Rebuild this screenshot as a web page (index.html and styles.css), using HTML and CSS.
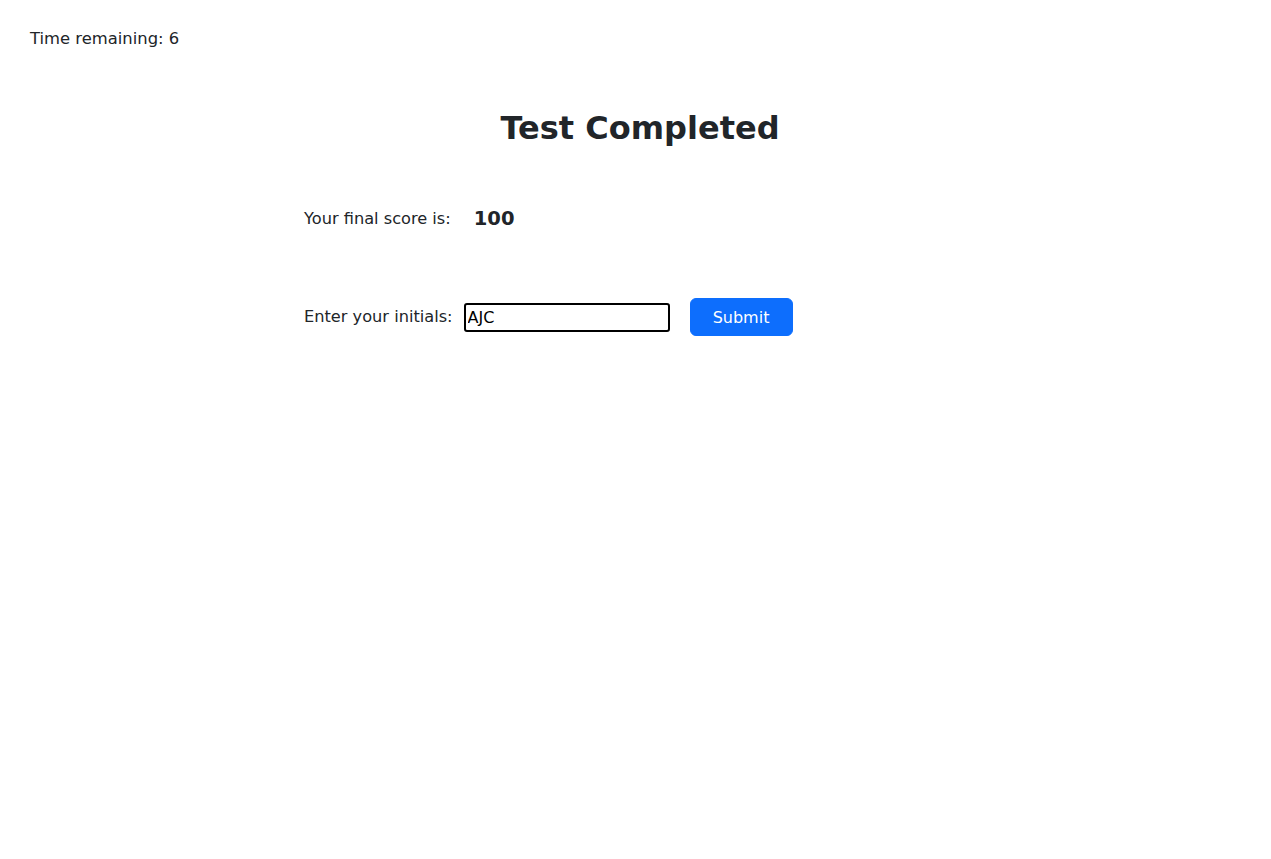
FILE: index.html
```html
<!DOCTYPE html>
<html>
<head>
<meta charset="utf-8">
<link rel="stylesheet" href="styles.css">
</head>
<body>
<header class="topbar">
  <div class="timer">Time remaining: 6</div>
</header>
<main class="main">
  <h1 class="title">Test Completed</h1>
  <div class="panel">
    <div class="score-row">
      <span class="label">Your final score is:</span>
      <span class="score">100</span>
    </div>
    <form class="form-row">
      <label class="label" for="initials">Enter your initials:</label>
      <input id="initials" class="initials" type="text" value="AJC">
      <button type="button" class="submit">Submit</button>
    </form>
  </div>
</main>
</body>
</html>
```

FILE: styles.css
```css
html, body {
  margin: 0;
  padding: 0;
  background: #fff;
  color: #212529;
  font-family: "DejaVu Sans", Verdana, sans-serif;
  font-size: 16px;
  line-height: 1.5;
}

.topbar {
  padding: 27px 30px 0;
}

.timer {
  font-size: 16.4px;
  line-height: 24px;
  color: #212529;
}

.main {
  display: flex;
  flex-direction: column;
  align-items: center;
}

.title {
  margin: 58px 0 0;
  font-size: 32px;
  font-weight: bold;
  line-height: 38px;
  text-align: center;
  padding-left: 9px;
}

.panel {
  align-self: flex-start;
  margin-left: 304px;
  margin-top: 57px;
  display: flex;
  flex-direction: column;
}

.score-row {
  display: flex;
  align-items: center;
  gap: 23px;
  height: 30px;
}

.score {
  font-weight: bold;
  font-size: 19.5px;
}

.form-row {
  margin: 64px 0 0;
  display: flex;
  align-items: center;
}

.label {
  font-size: 16.2px;
  line-height: 24px;
}

.initials {
  margin: 1px 0 0 11px;
  width: 198px;
  height: 25px;
  padding: 0 2px;
  box-sizing: content-box;
  border: 2px solid #000;
  border-radius: 3px;
  font-family: "DejaVu Sans", sans-serif;
  font-size: 16px;
  color: #000;
  outline: none;
}

.submit {
  margin-left: 20px;
  width: 103px;
  height: 38px;
  background: #0d6efd;
  border: 1px solid #0d6efd;
  border-radius: 6px;
  color: #fff;
  font-family: "DejaVu Sans", sans-serif;
  font-size: 16px;
  cursor: pointer;
}
```
